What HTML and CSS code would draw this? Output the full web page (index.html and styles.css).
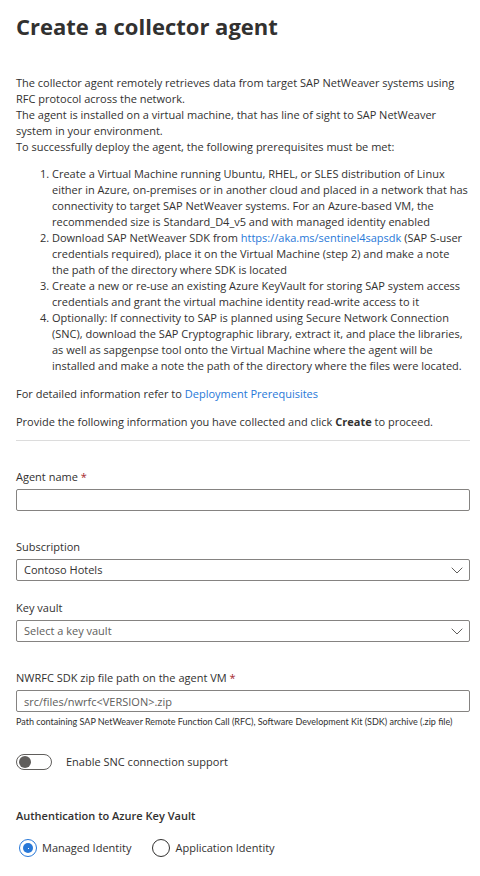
FILE: index.html
```html
<!DOCTYPE html>
<html lang="en">
<head>
<meta charset="utf-8">
<meta name="viewport" content="width=device-width, initial-scale=1">
<title>Create a collector agent</title>
<link rel="stylesheet" href="styles.css">
</head>
<body>
<main class="panel">
  <h1 class="title">Create a collector agent</h1>
  <section class="intro">
    <p>The collector agent remotely retrieves data from target SAP NetWeaver systems using RFC protocol across the network.</p>
    <p>The agent is installed on a virtual machine, that has line of sight to SAP NetWeaver system in your environment.</p>
    <p>To successfully deploy the agent, the following prerequisites must be met:</p>
    <ol class="steps">
      <li>Create a Virtual Machine running Ubuntu, RHEL, or SLES distribution of Linux either in Azure, on-premises or in another cloud and placed in a network that has connectivity to target SAP NetWeaver systems. For an Azure-based VM, the recommended size is Standard_D4_v5 and with managed identity enabled</li>
      <li>Download SAP NetWeaver SDK from <a href="https://aka.ms/sentinel4sapsdk">https://aka.ms/sentinel4sapsdk</a> (SAP S-user credentials required), place it on the Virtual Machine (step 2) and make a note the&nbsp;path of the directory where SDK is located</li>
      <li>Create a new or re-use an existing Azure KeyVault for storing SAP system access credentials and grant the virtual machine identity read-write access to it</li>
      <li>Optionally: If connectivity to SAP is planned using Secure Network Connection (SNC), download the SAP Cryptographic library, extract it, and place the libraries, as well as sapgenpse tool onto the Virtual Machine where the agent will be installed and make a note the path of the directory where the files were located.</li>
    </ol>
    <p class="note">For detailed information refer to <a href="#prerequisites">Deployment Prerequisites</a></p>
    <p class="note">Provide the following information you have collected and click <strong>Create</strong> to proceed.</p>
  </section>
  <form class="form">
    <div class="field field-wide">
      <label for="agent">Agent name <span class="required">*</span></label>
      <input class="control" id="agent" type="text" required>
    </div>
    <div class="field">
      <label for="subscription">Subscription</label>
      <div class="picker">
        <select class="control" id="subscription"><option>Contoso Hotels</option></select>
        <svg class="chevron" viewBox="0 0 12 7" aria-hidden="true"><path d="M.7.7 6 6 11.300.7"/></svg>
      </div>
    </div>
    <div class="field">
      <label for="vault">Key vault</label>
      <div class="picker">
        <select class="control empty" id="vault"><option>Select a key vault</option></select>
        <svg class="chevron" viewBox="0 0 12 7" aria-hidden="true"><path d="M.7.7 6 6 11.300.7"/></svg>
      </div>
    </div>
    <div class="field path-field">
      <label for="path">NWRFC SDK zip file path on the agent VM <span class="required">*</span></label>
      <input class="control" id="path" type="text" placeholder="src/files/nwrfc&lt;VERSION&gt;.zip" aria-describedby="path-help" required>
      <p class="help" id="path-help">Path containing SAP NetWeaver Remote Function Call (RFC), Software Development Kit (SDK) archive (.zip file)</p>
    </div>
    <label class="toggle-row"><input class="toggle" type="checkbox" role="switch">Enable SNC connection support</label>
    <fieldset class="auth">
      <legend>Authentication to Azure Key Vault</legend>
      <div class="choices">
        <label class="choice"><input type="radio" name="auth" checked>Managed Identity</label>
        <label class="choice"><input type="radio" name="auth">Application Identity</label>
      </div>
    </fieldset>
  </form>
</main>
</body>
</html>
```
FILE: styles.css
```css
* { box-sizing: border-box; }
body {
  margin: 0;
  background: #fff;
  color: #323130;
  font: 11px/16px "Open Sans", "Noto Sans", sans-serif;
}
p { margin: 0; }
a { color: #2878d8; text-decoration: none; }
.panel { padding: 10px 10px 16px 16px; }
.title { margin: 0 0 33px; font-size: 22px; line-height: 32px; font-weight: 700; }
.intro { border-bottom: 1px solid #dcdcdc; padding-bottom: 10px; }
.steps { margin: 11px 0 12px; padding-left: 36px; }
.note + .note { margin-top: 12px; }
.form { padding-top: 28px; }
.field { display: grid; gap: 4px; margin-bottom: 19px; }
.field-wide { margin-bottom: 28px; }
.path-field { margin-top: 28px; margin-bottom: 26px; }
.required { color: #a4262c; }
.control {
  display: block;
  width: 100%;
  height: 22px;
  margin: 0;
  padding: 0 7px;
  border: 1px solid #858381;
  border-radius: 2px;
  background: #fff;
  color: #323130;
  font: inherit;
  appearance: none;
}
.control::placeholder { color: #605e5c; opacity: 1; }
.empty { color: #605e5c; }
.picker { position: relative; }
.chevron {
  position: absolute;
  top: 8px;
  right: 7px;
  width: 12px;
  height: 7px;
  fill: none;
  stroke: #605e5c;
  pointer-events: none;
}
.help { font-family: Lato, sans-serif; font-size: 9px; line-height: 12px; }
.toggle-row { display: flex; align-items: center; gap: 14px; width: max-content; }
.toggle {
  display: flex;
  align-items: center;
  width: 36px;
  height: 16px;
  margin: 0;
  padding: 0 2px;
  border: 1px solid #605e5c;
  border-radius: 8px;
  appearance: none;
}
.toggle::before { content: ""; width: 12px; height: 12px; border-radius: 50%; background: #605e5c; }
.toggle:checked { justify-content: flex-end; }
.auth { margin: 38px 0 0; padding: 0; border: 0; }
.auth legend { padding: 0; font-weight: 600; }
.choices { display: flex; gap: 21px; padding: 15px 3px 0; }
.choice { display: flex; align-items: center; gap: 5px; }
.choice input {
  display: grid;
  place-items: center;
  width: 18px;
  height: 18px;
  margin: 0;
  border: 1px solid #323130;
  border-radius: 50%;
  appearance: none;
}
.choice input:checked { border-color: #2878d8; }
.choice input:checked::before {
  content: "";
  width: 10px;
  height: 10px;
  border-radius: 50%;
  background: #2878d8 linear-gradient(#fff, #fff) center / 1px 1px no-repeat;
}
```
